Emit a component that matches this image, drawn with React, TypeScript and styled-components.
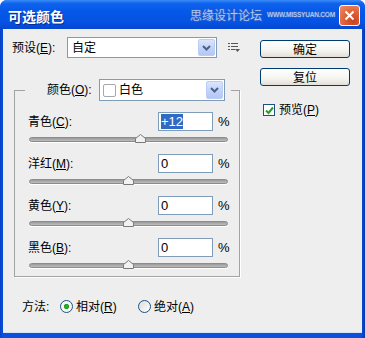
import React from "react";
import styled, { createGlobalStyle } from "styled-components";

const GlobalStyle = createGlobalStyle`
  html, body {
    margin: 0;
    padding: 0;
    background: #ffffff;
  }
  body {
    font-family: "Liberation Sans", "Noto Sans CJK SC", sans-serif;
    font-size: 12px;
  }
`;

const channels = [
  { name: "青色", key: "C", value: "+12", selected: true, pos: 12 },
  { name: "洋红", key: "M", value: "0", selected: false, pos: 0 },
  { name: "黄色", key: "Y", value: "0", selected: false, pos: 0 },
  { name: "黑色", key: "B", value: "0", selected: false, pos: 0 },
];

const Hotkey = ({ label, k }: { label: string; k: string }) => (
  <>
    {label}(<u>{k}</u>)
  </>
);

const Chevron = () => (
  <svg width="9" height="6" viewBox="0 0 9 6">
    <polyline points="1,1 4.5,4.5 8,1" fill="none" stroke="#4d6185" strokeWidth="2" />
  </svg>
);

const Thumb = () => (
  <svg width="11" height="9" viewBox="0 0 11 9">
    <polygon
      points="0.5,4.5 5.5,0.5 10.5,4.5 10.5,8.5 0.5,8.5"
      fill="#f2f2f2"
      stroke="#7a7a7a"
      strokeWidth="1"
    />
  </svg>
);

export default function App() {
  return (
    <>
      <GlobalStyle />
      <Window>
        <TitleBar>
          <Title>可选颜色</Title>
          <Watermark>
            <WatermarkCn>思缘设计论坛</WatermarkCn>
            <WatermarkUrl>WWW.MISSYUAN.COM</WatermarkUrl>
          </Watermark>
          <CloseButton>
            <svg width="11" height="11" viewBox="0 0 11 11">
              <path d="M1.5 1.5 L9.5 9.5 M9.5 1.5 L1.5 9.5" stroke="#fff" strokeWidth="2" />
            </svg>
          </CloseButton>
        </TitleBar>
        <Body>
          <LeftCol>
            <PresetRow>
              <PresetLabel>
                <Hotkey label="预设" k="E" />:
              </PresetLabel>
              <Select $width={150}>
                <SelectText>自定</SelectText>
                <ArrowButton>
                  <Chevron />
                </ArrowButton>
              </Select>
              <MenuIcon>
                <svg width="12" height="11" viewBox="0 0 12 11">
                  <rect x="0" y="1" width="2" height="1" fill="#555" />
                  <rect x="3" y="1" width="7" height="1" fill="#555" />
                  <rect x="0" y="4" width="2" height="1" fill="#555" />
                  <rect x="3" y="4" width="7" height="1" fill="#555" />
                  <rect x="0" y="7" width="2" height="1" fill="#555" />
                  <rect x="3" y="7" width="4" height="1" fill="#555" />
                  <polygon points="7,7 12,7 9.5,10" fill="#555" />
                </svg>
              </MenuIcon>
            </PresetRow>

            <Group>
              <Legend>
                <LegendLabel>
                  <Hotkey label="颜色" k="O" />:
                </LegendLabel>
                <Select $width={126} $height={22}>
                  <Swatch />
                  <SelectText>白色</SelectText>
                  <ArrowButton>
                    <Chevron />
                  </ArrowButton>
                </Select>
              </Legend>
              <GroupBody>
                {channels.map((c) => (
                  <Channel key={c.key}>
                    <ChannelHead>
                      <ChannelLabel>
                        <Hotkey label={c.name} k={c.key} />:
                      </ChannelLabel>
                      <NumberField>
                        {c.selected ? <Selection>{c.value}</Selection> : c.value}
                      </NumberField>
                      <Percent>%</Percent>
                    </ChannelHead>
                    <Slider>
                      <Track />
                      <ThumbWrap style={{ left: `${((c.pos + 100) / 200) * 199 - 5.5}px` }}>
                        <Thumb />
                      </ThumbWrap>
                    </Slider>
                  </Channel>
                ))}
              </GroupBody>
            </Group>

            <MethodRow>
              <MethodLabel>方法:</MethodLabel>
              <RadioOption>
                <Radio $checked />
                <span>
                  <Hotkey label="相对" k="R" />
                </span>
              </RadioOption>
              <RadioOption>
                <Radio />
                <span>
                  <Hotkey label="绝对" k="A" />
                </span>
              </RadioOption>
            </MethodRow>
          </LeftCol>

          <RightCol>
            <Button>确定</Button>
            <Button>复位</Button>
            <CheckRow>
              <Checkbox>
                <svg width="9" height="9" viewBox="0 0 9 9">
                  <path d="M1 4.5 L3.5 7 L8 1.5" fill="none" stroke="#21a121" strokeWidth="2" />
                </svg>
              </Checkbox>
              <span>
                <Hotkey label="预览" k="P" />
              </span>
            </CheckRow>
          </RightCol>
        </Body>
      </Window>
    </>
  );
}

const Window = styled.div`
  width: 365px;
  height: 338px;
  display: flex;
  flex-direction: column;
  background: linear-gradient(90deg, #0842c8 0%, #0a50dd 1%, #0a50dd 99%, #0638b0 100%);
  border-radius: 7px 7px 0 0;
  overflow: hidden;
  color: #000;
`;

const TitleBar = styled.div`
  position: relative;
  height: 29px;
  flex: none;
  display: flex;
  align-items: center;
  justify-content: space-between;
  padding-left: 8px;
  background: linear-gradient(
    180deg,
    #3a8cf6 0%,
    #0f63ee 12%,
    #0558e8 40%,
    #0553e3 75%,
    #0646cf 100%
  );
`;

const Title = styled.div`
  font-family: "Noto Sans CJK SC", sans-serif;
  font-weight: 700;
  font-size: 14px;
  line-height: 16px;
  color: #ffffff;
  text-shadow: 1px 1px 0 #0a2c8c;
  padding-top: 2px;
`;

const Watermark = styled.div`
  position: absolute;
  left: 190px;
  top: 8px;
  display: flex;
  align-items: center;
  gap: 5px;
  z-index: 2;
`;

const WatermarkCn = styled.span`
  font-family: "Noto Sans CJK SC", sans-serif;
  font-size: 12px;
  line-height: 14px;
  color: #a9c8f6;
  text-shadow: -1px 0 #2a5fcc, 1px 0 #2a5fcc, 0 1px #2a5fcc, 0 -1px #2a5fcc;
`;

const WatermarkUrl = styled.span`
  font-family: "Liberation Sans", sans-serif;
  font-size: 8px;
  font-weight: 700;
  line-height: 10px;
  color: #a9c8f6;
  letter-spacing: -0.3px;
  transform: scaleX(0.82);
  transform-origin: left center;
  text-shadow: -1px 0 #2a5fcc, 1px 0 #2a5fcc, 0 1px #2a5fcc, 0 -1px #2a5fcc;
`;

const CloseButton = styled.div`
  width: 19px;
  height: 19px;
  margin-right: 5px;
  margin-top: 2px;
  border: 1px solid #ffffff;
  border-radius: 3px;
  display: flex;
  align-items: center;
  justify-content: center;
  background: radial-gradient(circle at 70% 80%, #c9431d 0%, #e2683e 55%, #f08d66 100%);
`;

const Body = styled.div`
  flex: 1;
  margin: 0 3px 5px 3px;
  background: #eeeeee;
  display: flex;
  border-bottom: 1px solid #d8e4f6;
`;

const LeftCol = styled.div`
  width: 228px;
  padding: 8px 0 0 9px;
  display: flex;
  flex-direction: column;
`;

const PresetRow = styled.div`
  display: flex;
  align-items: center;
  height: 21px;
`;

const PresetLabel = styled.div`
  width: 55px;
  line-height: 14px;
`;

const Select = styled.div<{ $width: number; $height?: number }>`
  width: ${({ $width }) => $width}px;
  height: ${({ $height }) => $height ?? 21}px;
  box-sizing: border-box;
  border: 1px solid #7f9db9;
  background: #ffffff;
  display: flex;
  align-items: center;
  padding: 1px;
`;

const SelectText = styled.span`
  flex: 1;
  padding-left: 3px;
  line-height: 14px;
`;

const ArrowButton = styled.div`
  width: 15px;
  align-self: stretch;
  border: 1px solid #bccdf5;
  border-radius: 2px;
  background: linear-gradient(180deg, #dbe5fd 0%, #c3d4fb 50%, #b3c7f4 100%);
  display: flex;
  align-items: center;
  justify-content: center;
`;

const Swatch = styled.span`
  width: 13px;
  height: 13px;
  box-sizing: border-box;
  margin-left: 2px;
  border: 1px solid #a8a8a8;
  border-radius: 2px;
  background: #ffffff;
`;

const MenuIcon = styled.div`
  margin-left: 11px;
  display: flex;
`;

const Group = styled.fieldset`
  margin: 21px 0 0 2px;
  padding: 0;
  width: 226px;
  box-sizing: border-box;
  border: 1px solid #a3a3a3;
  box-shadow: 1px 1px 0 #ffffff;
  min-inline-size: 0;
`;

const Legend = styled.legend`
  margin-left: 10px;
  padding: 0 6px 0 22px;
  display: flex;
  align-items: center;
`;

const LegendLabel = styled.span`
  width: 52px;
  line-height: 14px;
`;

const GroupBody = styled.div`
  padding: 11px 0 6px 13px;
  display: flex;
  flex-direction: column;
  gap: 10px;
`;

const Channel = styled.div`
  display: flex;
  flex-direction: column;
`;

const ChannelHead = styled.div`
  display: flex;
  align-items: center;
  height: 19px;
`;

const ChannelLabel = styled.span`
  width: 130px;
  line-height: 14px;
`;

const NumberField = styled.div`
  width: 55px;
  height: 19px;
  box-sizing: border-box;
  border: 1px solid #7f9db9;
  background: #ffffff;
  padding: 1px 0 0 2px;
  font-size: 13px;
  line-height: 15px;
`;

const Selection = styled.span`
  background: #316ac5;
  color: #ffffff;
`;

const Percent = styled.span`
  margin-left: 5px;
  font-size: 13px;
  line-height: 14px;
`;

const Slider = styled.div`
  position: relative;
  width: 199px;
  height: 11px;
  margin: 2px 0 0 1px;
  padding-top: 4px;
  box-sizing: border-box;
`;

const Track = styled.div`
  height: 5px;
  box-sizing: border-box;
  border: 1px solid #8c8c8c;
  border-radius: 3px;
  background: linear-gradient(180deg, #9a9a9a 0%, #bdbdbd 100%);
  box-shadow: 0 1px 0 #ffffff;
`;

const ThumbWrap = styled.div`
  position: absolute;
  top: 1px;
  display: flex;
`;

const MethodRow = styled.div`
  display: flex;
  align-items: center;
  height: 13px;
  margin: 23px 0 0 10px;
`;

const MethodLabel = styled.span`
  width: 38px;
  line-height: 14px;
`;

const RadioOption = styled.label`
  display: flex;
  align-items: center;
  gap: 3px;
  width: 78px;
  line-height: 14px;
`;

const Radio = styled.span<{ $checked?: boolean }>`
  width: 13px;
  height: 13px;
  box-sizing: border-box;
  border-radius: 50%;
  border: 1px solid #1c5180;
  background: ${({ $checked }) =>
    $checked
      ? "radial-gradient(circle, #2fb52f 0px, #21a121 2.2px, #f2f2ee 3px, #ffffff 100%)"
      : "linear-gradient(135deg, #dcdcd6 0%, #ffffff 100%)"};
`;

const RightCol = styled.div`
  margin-left: 20px;
  padding-top: 11px;
  display: flex;
  flex-direction: column;
  gap: 10px;
`;

const Button = styled.div`
  width: 90px;
  height: 18px;
  box-sizing: border-box;
  border: 1px solid #003c74;
  border-radius: 3px;
  background: linear-gradient(180deg, #ffffff 0%, #f4f4f0 60%, #e2dfd6 100%);
  display: flex;
  align-items: center;
  justify-content: center;
  font-family: "Noto Sans CJK SC", sans-serif;
  font-size: 12px;
  line-height: 14px;
`;

const CheckRow = styled.label`
  display: flex;
  align-items: center;
  gap: 4px;
  margin: 7px 0 0 3px;
  line-height: 14px;
`;

const Checkbox = styled.span`
  width: 12px;
  height: 12px;
  box-sizing: border-box;
  border: 1px solid #1c5180;
  background: #ffffff;
  display: flex;
  align-items: center;
  justify-content: center;
`;
